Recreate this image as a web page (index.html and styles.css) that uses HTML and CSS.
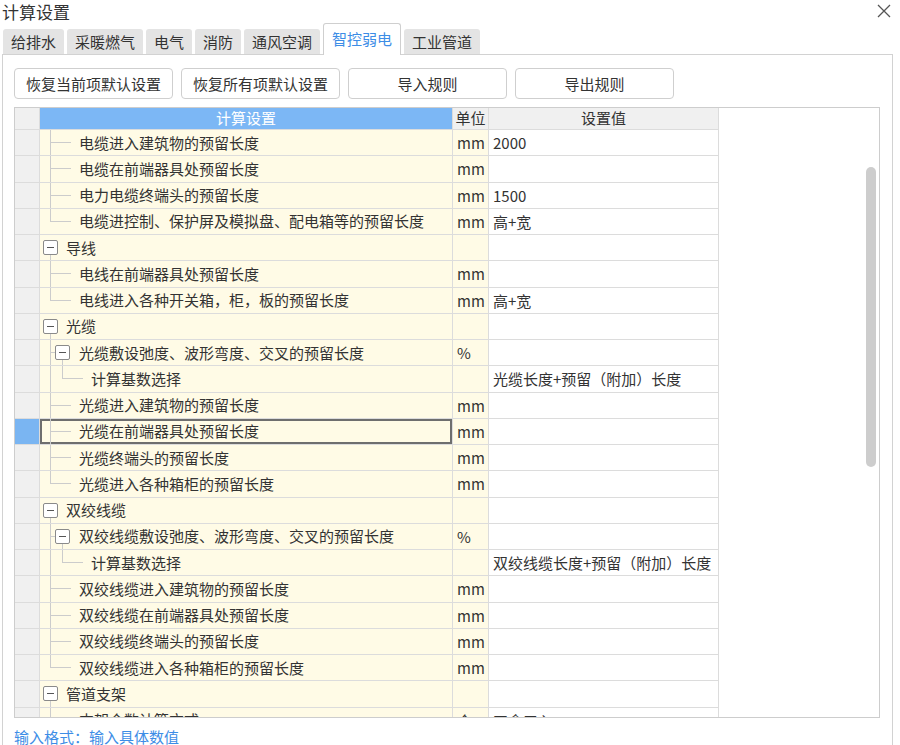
FILE: index.html
```html
<!DOCTYPE html>
<html lang="zh-CN">
<head>
<meta charset="utf-8">
<title>计算设置</title>
<link rel="stylesheet" href="styles.css">
</head>
<body>
<div class="dialog">
  <div class="titlebar">
    <span class="title">计算设置</span>
    <svg class="close" width="14" height="14" viewBox="0 0 14 14"><path d="M1 1L13 13M13 1L1 13" stroke="#555" stroke-width="1.3" fill="none"/></svg>
  </div>
  <div class="tabs">
    <div class="tab">给排水</div>
    <div class="tab">采暖燃气</div>
    <div class="tab">电气</div>
    <div class="tab">消防</div>
    <div class="tab">通风空调</div>
    <div class="tab active">智控弱电</div>
    <div class="tab">工业管道</div>
  </div>
  <div class="panel">
    <div class="toolbar">
      <button class="btn">恢复当前项默认设置</button>
      <button class="btn">恢复所有项默认设置</button>
      <button class="btn">导入规则</button>
      <button class="btn">导出规则</button>
    </div>
    <div class="grid-wrap">
      <div class="row head">
        <div class="rh"></div>
        <div class="hc blue">计算设置</div>
        <div class="hc">单位</div>
        <div class="hc">设置值</div>
      </div>
      <div class="row"><div class="rh"></div><div class="tc"><span class="conn"></span><span class="txt">电缆进入建筑物的预留长度</span></div><div class="uc">mm</div><div class="vc">2000</div></div>
      <div class="row"><div class="rh"></div><div class="tc"><span class="conn"></span><span class="txt">电缆在前端器具处预留长度</span></div><div class="uc">mm</div><div class="vc"></div></div>
      <div class="row"><div class="rh"></div><div class="tc"><span class="conn"></span><span class="txt">电力电缆终端头的预留长度</span></div><div class="uc">mm</div><div class="vc">1500</div></div>
      <div class="row"><div class="rh"></div><div class="tc"><span class="conn last"></span><span class="txt">电缆进控制、保护屏及模拟盘、配电箱等的预留长度</span></div><div class="uc">mm</div><div class="vc">高+宽</div></div>
      <div class="row"><div class="rh"></div><div class="tc l1 open"><span class="exp"></span><span class="txt">导线</span></div><div class="uc"></div><div class="vc"></div></div>
      <div class="row"><div class="rh"></div><div class="tc"><span class="conn"></span><span class="txt">电线在前端器具处预留长度</span></div><div class="uc">mm</div><div class="vc"></div></div>
      <div class="row"><div class="rh"></div><div class="tc"><span class="conn last"></span><span class="txt">电线进入各种开关箱，柜，板的预留长度</span></div><div class="uc">mm</div><div class="vc">高+宽</div></div>
      <div class="row"><div class="rh"></div><div class="tc l1 open"><span class="exp"></span><span class="txt">光缆</span></div><div class="uc"></div><div class="vc"></div></div>
      <div class="row"><div class="rh"></div><div class="tc l2 open"><span class="stub"></span><span class="exp"></span><span class="txt">光缆敷设弛度、波形弯度、交叉的预留长度</span></div><div class="uc">%</div><div class="vc"></div></div>
      <div class="row"><div class="rh"></div><div class="tc"><span class="pipe"></span><span class="conn last"></span><span class="txt">计算基数选择</span></div><div class="uc"></div><div class="vc">光缆长度+预留（附加）长度</div></div>
      <div class="row"><div class="rh"></div><div class="tc"><span class="conn"></span><span class="txt">光缆进入建筑物的预留长度</span></div><div class="uc">mm</div><div class="vc"></div></div>
      <div class="row selected"><div class="rh"></div><div class="tc"><span class="conn"></span><span class="txt">光缆在前端器具处预留长度</span></div><div class="uc">mm</div><div class="vc"></div></div>
      <div class="row"><div class="rh"></div><div class="tc"><span class="conn"></span><span class="txt">光缆终端头的预留长度</span></div><div class="uc">mm</div><div class="vc"></div></div>
      <div class="row"><div class="rh"></div><div class="tc"><span class="conn last"></span><span class="txt">光缆进入各种箱柜的预留长度</span></div><div class="uc">mm</div><div class="vc"></div></div>
      <div class="row"><div class="rh"></div><div class="tc l1 open"><span class="exp"></span><span class="txt">双绞线缆</span></div><div class="uc"></div><div class="vc"></div></div>
      <div class="row"><div class="rh"></div><div class="tc l2 open"><span class="stub"></span><span class="exp"></span><span class="txt">双绞线缆敷设弛度、波形弯度、交叉的预留长度</span></div><div class="uc">%</div><div class="vc"></div></div>
      <div class="row"><div class="rh"></div><div class="tc"><span class="pipe"></span><span class="conn last"></span><span class="txt">计算基数选择</span></div><div class="uc"></div><div class="vc">双绞线缆长度+预留（附加）长度</div></div>
      <div class="row"><div class="rh"></div><div class="tc"><span class="conn"></span><span class="txt">双绞线缆进入建筑物的预留长度</span></div><div class="uc">mm</div><div class="vc"></div></div>
      <div class="row"><div class="rh"></div><div class="tc"><span class="conn"></span><span class="txt">双绞线缆在前端器具处预留长度</span></div><div class="uc">mm</div><div class="vc"></div></div>
      <div class="row"><div class="rh"></div><div class="tc"><span class="conn"></span><span class="txt">双绞线缆终端头的预留长度</span></div><div class="uc">mm</div><div class="vc"></div></div>
      <div class="row"><div class="rh"></div><div class="tc"><span class="conn last"></span><span class="txt">双绞线缆进入各种箱柜的预留长度</span></div><div class="uc">mm</div><div class="vc"></div></div>
      <div class="row"><div class="rh"></div><div class="tc l1 open"><span class="exp"></span><span class="txt">管道支架</span></div><div class="uc"></div><div class="vc"></div></div>
      <div class="row"><div class="rh"></div><div class="tc"><span class="conn"></span><span class="txt">支架个数计算方式</span></div><div class="uc">个</div><div class="vc">四舍五入</div></div>
      <div class="thumb"></div>
    </div>
    <div class="hint">输入格式：输入具体数值</div>
  </div>
</div>
</body>
</html>
```

FILE: styles.css
```css
html, body {
  margin: 0;
  padding: 0;
  background: #ffffff;
}
body {
  font-family: "Noto Sans CJK SC", "Noto Sans", sans-serif;
  font-size: 15px;
  color: #333333;
  width: 900px;
  height: 745px;
  overflow: hidden;
}
.dialog {
  display: flex;
  flex-direction: column;
}
.titlebar {
  height: 23px;
  display: flex;
  align-items: center;
  justify-content: space-between;
  padding: 0 9px 0 2px;
}
.title {
  font-size: 17px;
  line-height: 23px;
  color: #333;
}
.close {
  margin-top: -1px;
}
.tabs {
  display: flex;
  align-items: flex-end;
  gap: 3px;
  padding-left: 3px;
  height: 31px;
  position: relative;
  z-index: 1;
}
.tab {
  height: 25px;
  line-height: 25px;
  padding: 0 8px;
  background: #e4e4e4;
  border-radius: 3px 3px 0 0;
  font-size: 15px;
  color: #333;
  box-sizing: border-box;
}
.tab.active {
  height: 32px;
  line-height: 30px;
  background: #ffffff;
  color: #3d8de6;
  border: 1px solid #cfcfcf;
  border-bottom: none;
  margin-bottom: -1px;
}
.panel {
  margin-left: 2px;
  width: 891px;
  height: 700px;
  box-sizing: border-box;
  border: 1px solid #d2d2d2;
  padding: 13px 0 0 11px;
  display: flex;
  flex-direction: column;
}
.toolbar {
  display: flex;
  gap: 8px;
  height: 31px;
}
.btn {
  width: 159px;
  height: 31px;
  border: 1px solid #cfcfcf;
  border-radius: 4px;
  background: #ffffff;
  font-family: inherit;
  font-size: 15px;
  color: #333;
  padding: 0;
}
.grid-wrap {
  margin-top: 8px;
  width: 866px;
  height: 611px;
  box-sizing: border-box;
  border: 1px solid #cdcdcd;
  overflow: hidden;
  position: relative;
  background: #fff;
}
.row {
  display: grid;
  grid-template-columns: 25px 413px 36px 230px;
  height: 26.25px;
}
.row.head {
  height: 22px;
}
.row > div {
  border-right: 1px solid #dcdcdc;
  border-bottom: 1px solid #dcdcdc;
  box-sizing: border-box;
  white-space: nowrap;
  overflow: hidden;
}
.rh {
  background: #f0f0f0;
}
.row.selected .rh {
  background: #7ab5f2;
}
.hc {
  background: #f0f0f0;
  text-align: center;
  line-height: 20px;
  color: #333;
}
.hc.blue {
  background: #7cb7f5;
  color: #ffffff;
}
.tc {
  background: #fffbe6;
  display: flex;
  align-items: stretch;
  padding-left: 10px;
}
.row.selected .tc {
  box-shadow: inset 0 0 0 2px #6e6e6e;
}
.txt {
  align-self: center;
  line-height: 20px;
}
.conn {
  width: 21px;
  margin-right: 8px;
  flex: none;
  background:
    linear-gradient(#cccccc, #cccccc) 0 0 / 1px 100% no-repeat,
    linear-gradient(#cccccc, #cccccc) 0 50% / 100% 1px no-repeat;
}
.conn.last {
  background:
    linear-gradient(#cccccc, #cccccc) 0 0 / 1px 50% no-repeat,
    linear-gradient(#cccccc, #cccccc) 0 50% / 100% 1px no-repeat;
}
.pipe {
  width: 12px;
  flex: none;
  background: linear-gradient(#cccccc, #cccccc) 0 0 / 1px 100% no-repeat;
}
.stub {
  width: 5px;
  flex: none;
  background:
    linear-gradient(#cccccc, #cccccc) 0 0 / 1px 100% no-repeat,
    linear-gradient(#cccccc, #cccccc) 0 50% / 100% 1px no-repeat;
}
.exp {
  width: 15px;
  height: 15px;
  flex: none;
  align-self: center;
  box-sizing: border-box;
  border: 1px solid #8a8a8a;
  border-radius: 2px;
  background: linear-gradient(#555, #555) center / 7px 1px no-repeat, #fff;
  margin-right: 8px;
}
.l1 {
  padding-left: 3px;
  background:
    linear-gradient(#cccccc, #cccccc) 10px 100% / 1px 6px no-repeat,
    #fffbe6;
}
.l2 .exp {
  margin-right: 9px;
}
.l2 {
  background:
    linear-gradient(#cccccc, #cccccc) 22px 100% / 1px 6px no-repeat,
    #fffbe6;
}
.uc {
  background: #fffbe6;
  padding-left: 4px;
  line-height: 25px;
}
.vc {
  background: #ffffff;
  padding-left: 4px;
  line-height: 25px;
}
.thumb {
  position: absolute;
  left: 851px;
  top: 59px;
  width: 10px;
  height: 300px;
  border-radius: 5px;
  background: #cdcdcd;
}
.hint {
  margin-top: 9px;
  color: #3d8de6;
  font-size: 15px;
  line-height: 20px;
}
```
